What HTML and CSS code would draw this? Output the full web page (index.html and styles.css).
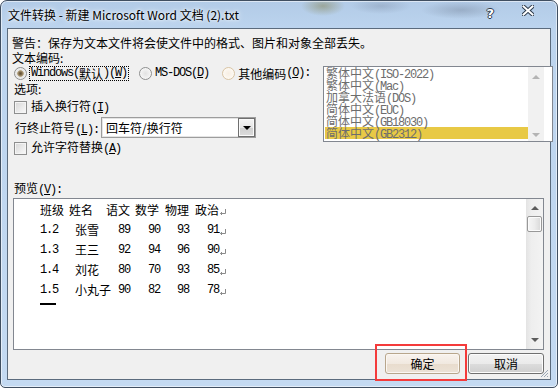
FILE: index.html
```html
<!DOCTYPE html>
<html lang="zh-CN">
<head>
<meta charset="utf-8">
<title>文件转换</title>
<link rel="stylesheet" href="styles.css">
</head>
<body>
<div class="window">
  <div class="titlebar">
    <span class="title">文件转换 - 新建 Microsoft Word 文档 (2).txt</span>
    <div class="tbtns">
      <span class="help">?</span>
      <svg class="close" width="12" height="11" viewBox="0 0 12 11">
        <path d="M1.5 1.5 L10.5 9.5 M10.5 1.5 L1.5 9.5" stroke="#2c3a4b" stroke-width="4" stroke-linecap="square"/>
        <path d="M1.5 1.5 L10.5 9.5 M10.5 1.5 L1.5 9.5" stroke="#ffffff" stroke-width="2" stroke-linecap="square"/>
      </svg>
    </div>
  </div>
  <div class="client">
    <div class="row">警告：保存为文本文件将会使文件中的格式、图片和对象全部丢失。</div>
    <div class="row">文本编码:</div>
    <div class="encrow">
      <div class="leftcol">
        <div class="radios">
          <span class="radio on"></span>
          <span class="rlabel focus"><span class="m">Windows(</span>默认<span class="m">)(<u>W</u>)</span></span>
          <span class="radio r2"></span>
          <span class="rlabel l2"><span class="m">MS-DOS(<u>D</u>)</span></span>
          <span class="radio hot r3"></span>
          <span class="rlabel l3">其他编码<span class="m">(<u>O</u>):</span></span>
        </div>
        <div class="row">选项:</div>
        <div class="check c1"><span class="box"></span><span class="clabel">插入换行符<span class="m">(<u>I</u>)</span></span></div>
        <div class="comborow">
          <span class="clab">行终止符号<span class="m">(<u>L</u>):</span></span>
          <div class="combo">
            <span class="ctext">回车符/换行符</span>
            <span class="cbtn"><span class="tri"></span></span>
          </div>
        </div>
        <div class="check c2"><span class="box"></span><span class="clabel">允许字符替换<span class="m">(<u>A</u>)</span></span></div>
      </div>
      <div class="listbox">
        <div class="items">
          <div class="item">繁体中文<span class="m">(ISO-2022)</span></div>
          <div class="item">繁体中文<span class="m">(Mac)</span></div>
          <div class="item">加拿大法语<span class="m">(DOS)</span></div>
          <div class="item">简体中文<span class="m">(EUC)</span></div>
          <div class="item">简体中文<span class="m">(GB18030)</span></div>
          <div class="item sel">简体中文<span class="m">(GB2312)</span></div>
        </div>
        <div class="lscroll">
          <span class="arr up dis"></span>
          <span class="arr down dis"></span>
        </div>
        <div class="lpad"></div>
      </div>
    </div>
    <div class="row pvlabel">预览<span class="m">(<u>V</u>):</span></div>
    <div class="preview">
      <div class="pv-content">
        <div class="pv-row">
          <span class="h1">班级</span><span class="h2">姓名</span><span class="h3">语文</span><span class="h4">数学</span><span class="h5">物理</span><span>政治</span><svg class="ret" width="8" height="8" viewBox="0 0 8 8"><path d="M6.5 1 V5.5 H1.5 M3 4 L1.5 5.5 L3 7" fill="none" stroke="#8a8a8a" stroke-width="1"/></svg>
        </div>
        <div class="pv-row">
          <span class="d1 m">1.2</span><span class="d2">张雪</span><span class="d3 m">89</span><span class="d4 m">90</span><span class="d5 m">93</span><span class="m">91</span><svg class="ret" width="8" height="8" viewBox="0 0 8 8"><path d="M6.5 1 V5.5 H1.5 M3 4 L1.5 5.5 L3 7" fill="none" stroke="#8a8a8a" stroke-width="1"/></svg>
        </div>
        <div class="pv-row">
          <span class="d1 m">1.3</span><span class="d2">王三</span><span class="d3 m">92</span><span class="d4 m">94</span><span class="d5 m">96</span><span class="m">90</span><svg class="ret" width="8" height="8" viewBox="0 0 8 8"><path d="M6.5 1 V5.5 H1.5 M3 4 L1.5 5.5 L3 7" fill="none" stroke="#8a8a8a" stroke-width="1"/></svg>
        </div>
        <div class="pv-row">
          <span class="d1 m">1.4</span><span class="d2">刘花</span><span class="d3 m">80</span><span class="d4 m">70</span><span class="d5 m">93</span><span class="m">85</span><svg class="ret" width="8" height="8" viewBox="0 0 8 8"><path d="M6.5 1 V5.5 H1.5 M3 4 L1.5 5.5 L3 7" fill="none" stroke="#8a8a8a" stroke-width="1"/></svg>
        </div>
        <div class="pv-row">
          <span class="d1 m">1.5</span><span class="d2">小丸子</span><span class="d3 m">90</span><span class="d4 m">82</span><span class="d5 m">98</span><span class="m">78</span><svg class="ret" width="8" height="8" viewBox="0 0 8 8"><path d="M6.5 1 V5.5 H1.5 M3 4 L1.5 5.5 L3 7" fill="none" stroke="#8a8a8a" stroke-width="1"/></svg>
        </div>
        <div class="pv-end"></div>
      </div>
      <div class="vscroll">
        <span class="arr up"></span>
        <span class="thumb"></span>
        <span class="track"></span>
        <span class="arr down"></span>
      </div>
    </div>
    <div class="buttons">
      <button class="btn ok">确定</button>
      <button class="btn cancel">取消</button>
    </div>
    <svg class="grip" width="10" height="10" viewBox="0 0 10 10">
      <path d="M9 2 L2 9 M9 5 L5 9 M9 8 L8 9" stroke="#9aa7b5" stroke-width="1"/>
    </svg>
  </div>
  <div class="highlight"></div>
</div>
</body>
</html>
```

FILE: styles.css
```css
* { box-sizing: border-box; }
html, body { margin: 0; padding: 0; }
body {
  width: 558px;
  height: 388px;
  overflow: hidden;
  background: #ffffff;
  font-family: "Noto Sans CJK SC", sans-serif;
  font-size: 12px;
  color: #000;
}
u { text-decoration: underline; text-underline-offset: 1px; }
.m {
  font-family: "Liberation Mono", monospace;
  font-size: 12px;
  letter-spacing: -1.2px;
}

.window {
  position: relative;
  width: 558px;
  height: 388px;
  border: 1px solid #404f61;
  border-radius: 7px 7px 5px 5px;
  padding: 0 6px 7px;
  display: flex;
  flex-direction: column;
  background:
    radial-gradient(22px 10px at 322px 5px, rgba(125, 120, 60, 0.45), transparent),
    radial-gradient(40px 9px at 460px 9px, rgba(80, 90, 110, 0.28), transparent),
    radial-gradient(30px 8px at 380px 5px, rgba(80, 90, 110, 0.22), transparent),
    linear-gradient(180deg, #b2cbe7 0, #bcd4ee 28px, #c4daf2 100%);
  box-shadow: inset 0 0 0 1px rgba(255, 255, 255, 0.55);
}

.titlebar {
  height: 27px;
  display: flex;
  align-items: center;
  padding-left: 1px;
}
.title {
  font-size: 12px;
  line-height: 16px;
  white-space: nowrap;
  text-shadow: 0 0 6px #fff, 0 0 3px rgba(255, 255, 255, 0.9);
}
.tbtns {
  margin-left: auto;
  margin-right: 17px;
  display: flex;
  align-items: center;
  height: 27px;
}
.help {
  font-family: "DejaVu Sans", sans-serif;
  font-weight: bold;
  font-size: 13px;
  line-height: 13px;
  color: #fff;
  margin-top: -2px;
  text-shadow: 1px 0 #2c3a4b, -1px 0 #2c3a4b, 0 1px #2c3a4b, 0 -1px #2c3a4b;
}
.close { margin-left: 28px; margin-top: -9px; display: block; }

.client {
  position: relative;
  flex: 1;
  border: 1px solid #5b6b7d;
  background: #f0f0f0;
  padding: 6px 6px 0 4px;
  display: flex;
  flex-direction: column;
}
.row {
  height: 15px;
  line-height: 15px;
  white-space: nowrap;
}

.encrow {
  margin-top: 1px;
  display: flex;
  align-items: flex-start;
}
.leftcol {
  width: 311px;
  flex-shrink: 0;
  padding-left: 2px;
}
.radios {
  height: 15px;
  display: flex;
  align-items: center;
  white-space: nowrap;
}
.radio {
  width: 13px;
  height: 13px;
  flex-shrink: 0;
  border-radius: 50%;
  border: 1px solid #8e8f8f;
  background: radial-gradient(circle at 50% 50%, #e2e2e2 0, #f6f6f6 70%);
}
.radio.on {
  background: radial-gradient(circle at 50% 50%, #5f4f35 0, #7d6a4a 1.5px, #b8a888 3px, #e4e4e4 3.6px, #f6f6f6 6px);
}
.radio.hot {
  border-color: #d9c4a4;
  background: radial-gradient(circle at 50% 50%, #f7eee2 0, #fdf9f3 70%);
}
.rlabel {
  height: 15px;
  line-height: 13px;
  display: inline-flex;
  align-items: center;
  white-space: nowrap;
}
.focus {
  margin-left: 2px;
  border: 1px dotted #000;
  padding: 0 1px;
}
.r2 { margin-left: 10px; }
.l2 { margin-left: 3px; }
.r3 { margin-left: 13px; }
.l3 { margin-left: 3px; }

.check {
  height: 16px;
  display: flex;
  align-items: center;
  white-space: nowrap;
}
.c1 { margin-top: 3px; }
.c2 { margin-top: 2px; }
.box {
  width: 13px;
  height: 13px;
  flex-shrink: 0;
  border: 1px solid #8e8f8f;
  background: linear-gradient(135deg, #d6d6d6 0, #ececec 60%, #fafafa 100%);
  box-shadow: inset 0 0 0 1px #f4f4f4;
}
.clabel { margin-left: 4px; line-height: 16px; }

.comborow {
  margin-top: 2px;
  height: 21px;
  display: flex;
  align-items: center;
  white-space: nowrap;
}
.clab { margin-left: 1px; width: 84px; }
.combo {
  margin-left: 2px;
  width: 155px;
  height: 21px;
  border: 1px solid #9d9d9d;
  box-shadow: inset 0 0 0 1px #e4e4e4;
  background: #fff;
  display: flex;
  align-items: center;
}
.ctext { flex: 1; padding-left: 4px; line-height: 19px; }
.cbtn {
  width: 17px;
  height: 19px;
  border: 1px solid #6f6f6f;
  background: linear-gradient(180deg, #f4f4f4 0, #e6e6e6 50%, #cfcfcf 51%, #dcdcdc 100%);
  box-shadow: inset 0 0 0 1px #fafafa;
  display: flex;
  align-items: center;
  justify-content: center;
}
.tri {
  width: 0;
  height: 0;
  border-left: 4px solid transparent;
  border-right: 4px solid transparent;
  border-top: 4px solid #000;
}

.listbox {
  width: 230px;
  height: 76px;
  flex-shrink: 0;
  margin-right: -9px;
  border: 1px solid #828790;
  background: #fff;
  display: flex;
}
.items {
  width: 204px;
  color: #6d6d6d;
}
.item {
  height: 12px;
  line-height: 12px;
  margin-left: 1px;
  padding-left: 1px;
  white-space: nowrap;
}
.item.sel { background: #e8c945; }
.lscroll {
  width: 16px;
  background: #f1f1f1;
  display: flex;
  flex-direction: column;
  justify-content: space-between;
  align-items: center;
  padding: 8px 0 4px;
}
.lpad { flex: 1; background: #fff; }

.arr {
  width: 0;
  height: 0;
  border-left: 4px solid transparent;
  border-right: 4px solid transparent;
}
.arr.up { border-bottom: 4px solid #5c5c5c; }
.arr.down { border-top: 4px solid #5c5c5c; }
.arr.up.dis { border-bottom-color: #b4b4b4; }
.arr.down.dis { border-top-color: #b4b4b4; }

.pvlabel { margin-top: 24px; padding-left: 2px; }
.preview {
  margin-top: 3px;
  margin-left: 1px;
  width: 531px;
  height: 152px;
  border: 1px solid #828790;
  background: #fff;
  display: flex;
}
.pv-content {
  flex: 1;
  padding: 1px 0 0 26px;
}
.pv-row {
  height: 20px;
  line-height: 20px;
  display: flex;
  align-items: center;
  white-space: nowrap;
}
.pv-row > span { display: inline-block; }
.h1 { width: 29px; }
.h2 { width: 37px; }
.h3 { width: 29px; }
.h4 { width: 30px; }
.h5 { width: 30px; }
.d1 { width: 35px; }
.d2 { width: 43px; }
.d3 { width: 30px; }
.d4 { width: 29px; }
.d5 { width: 30px; }
.ret { margin-left: 0; margin-top: 3px; }
.pv-end {
  width: 16px;
  height: 2px;
  background: #000;
  margin-top: 3px;
}
.vscroll {
  width: 17px;
  display: flex;
  flex-direction: column;
  align-items: center;
  background: linear-gradient(90deg, #e3e3e3 0, #eeeeee 30%, #f3f3f3 100%);
}
.vscroll .arr.up { margin-top: 7px; margin-bottom: 6px; }
.vscroll .arr.down { margin-bottom: 7px; margin-top: 6px; }
.thumb {
  width: 15px;
  height: 16px;
  border: 1px solid #989898;
  border-radius: 2px;
  background: linear-gradient(90deg, #f6f6f6 0, #ececec 50%, #d8d8d8 100%);
  box-shadow: inset 0 0 0 1px #fbfbfb;
}
.track { flex: 1; }

.buttons {
  margin-top: 3px;
  display: flex;
  justify-content: flex-end;
  gap: 8px;
}
.btn {
  height: 21px;
  padding: 0;
  font-family: "Noto Sans CJK SC", sans-serif;
  font-size: 12px;
  line-height: 19px;
  color: #000;
  border-radius: 3px;
}
.ok {
  width: 75px;
  border: 1px solid #b8a68c;
  background: linear-gradient(180deg, #f8f3ee 0, #f1e9e0 50%, #e8dccd 51%, #ece2d6 100%);
  box-shadow: inset 0 0 0 1px #fbf7f2;
}
.cancel {
  width: 76px;
  border: 1px solid #707070;
  background: linear-gradient(180deg, #f2f2f2 0, #ebebeb 50%, #dddddd 51%, #cfcfcf 100%);
  box-shadow: inset 0 0 0 1px #fcfcfc;
}
.grip {
  position: absolute;
  right: 1px;
  bottom: 1px;
}
.highlight {
  position: absolute;
  left: 374px;
  top: 343px;
  width: 92px;
  height: 37px;
  border: 2px solid #f43b3b;
}
```
